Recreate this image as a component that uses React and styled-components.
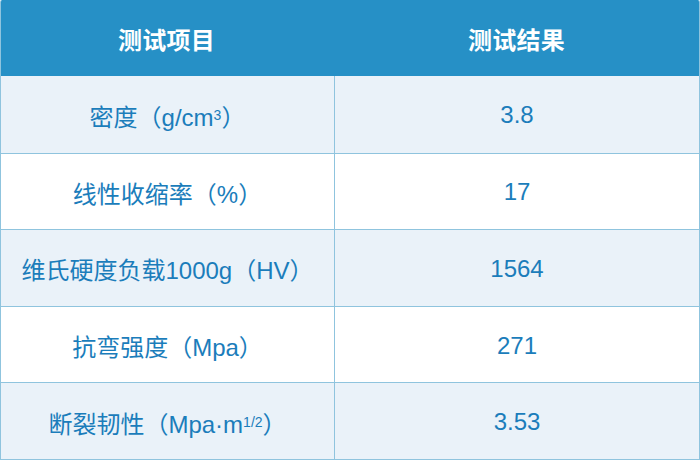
import React from 'react';
import styled, { createGlobalStyle } from 'styled-components';

const GlobalStyle = createGlobalStyle`
  body {
    margin: 0;
    background: #ffffff;
    font-family: "Liberation Sans", "Noto Sans CJK SC", sans-serif;
  }
`;

const Table = styled.div`
  width: 700px;
  height: 460px;
  box-sizing: border-box;
  display: grid;
  grid-template-rows: 76px repeat(5, 1fr);
  border-left: 1px solid #8fc4de;
  border-right: 1px solid #8fc4de;
  border-bottom: 1px solid #8fc4de;
  border-top-left-radius: 2px;
  border-top-right-radius: 2px;
  overflow: hidden;
`;

const Head = styled.div`
  display: grid;
  grid-template-columns: 333px 1fr;
  background: #2690c6;
  margin: 0 -1px;
`;

const HeadCell = styled.div`
  display: flex;
  align-items: center;
  justify-content: center;
  color: #ffffff;
  font-size: 24px;
  font-weight: bold;
  letter-spacing: 0.3px;
`;

const Row = styled.div`
  display: grid;
  grid-template-columns: 333px 1fr;
  background: ${(p) => (p.$alt ? '#eaf2f9' : '#ffffff')};
  border-top: ${(p) => (p.$first ? 'none' : '1px solid #8fc4de')};
`;

const Cell = styled.div`
  display: flex;
  align-items: center;
  justify-content: center;
  padding-top: 2px;
  color: #1b7dbb;
  font-size: 24px;
  border-left: ${(p) => (p.$divider ? '1px solid #8fc4de' : 'none')};
  white-space: nowrap;
`;

const Sup = styled.sup`
  font-size: 14px;
  vertical-align: 8px;
  line-height: 0;
`;

const rows = [
  [<>密度（g/cm<Sup>3</Sup>）</>, '3.8'],
  ['线性收缩率（%）', '17'],
  ['维氏硬度负载1000g（HV）', '1564'],
  ['抗弯强度（Mpa）', '271'],
  [<>断裂韧性（Mpa·m<Sup>1/2</Sup>）</>, '3.53'],
];

export default function App() {
  return (
    <>
      <GlobalStyle />
      <Table>
        <Head>
          <HeadCell>测试项目</HeadCell>
          <HeadCell>测试结果</HeadCell>
        </Head>
        {rows.map(([name, value], i) => (
          <Row key={i} $alt={i % 2 === 0} $first={i === 0}>
            <Cell>{name}</Cell>
            <Cell $divider>{value}</Cell>
          </Row>
        ))}
      </Table>
    </>
  );
}
